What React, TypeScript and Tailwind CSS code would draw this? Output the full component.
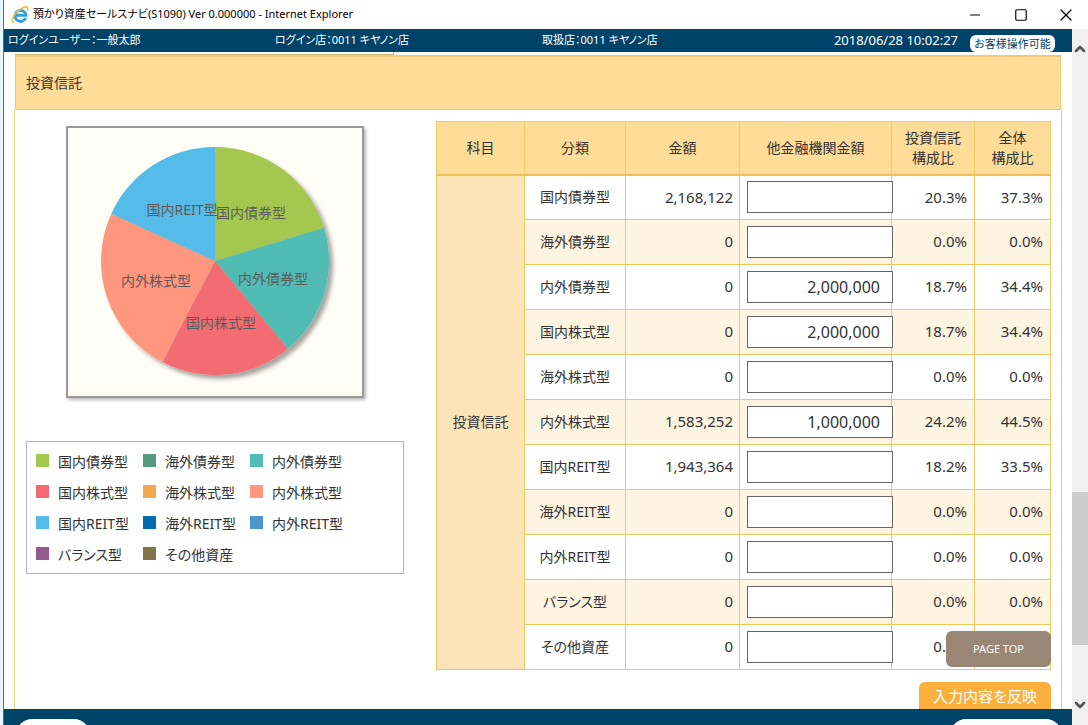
import { useState } from 'react';
import { ChevronDown, ChevronUp, Minus, Square, X } from 'lucide-react';

interface AssetRow {
  name: string;
  color: string;
  amount: string;
  other: string;
  fundRatio: number;
  totalRatio: number;
}

interface Slice {
  name: string;
  color: string;
  value: number;
  labelX: number;
  labelY: number;
}

const ROWS: AssetRow[] = [
  { name: '国内債券型', color: '#a4c84f', amount: '2,168,122', other: '', fundRatio: 20.3, totalRatio: 37.3 },
  { name: '海外債券型', color: '#569a7e', amount: '0', other: '', fundRatio: 0, totalRatio: 0 },
  { name: '内外債券型', color: '#51bcb3', amount: '0', other: '2,000,000', fundRatio: 18.7, totalRatio: 34.4 },
  { name: '国内株式型', color: '#f26c72', amount: '0', other: '2,000,000', fundRatio: 18.7, totalRatio: 34.4 },
  { name: '海外株式型', color: '#f2a84c', amount: '0', other: '', fundRatio: 0, totalRatio: 0 },
  { name: '内外株式型', color: '#ff967e', amount: '1,583,252', other: '1,000,000', fundRatio: 24.2, totalRatio: 44.5 },
  { name: '国内REIT型', color: '#55bbe9', amount: '1,943,364', other: '', fundRatio: 18.2, totalRatio: 33.5 },
  { name: '海外REIT型', color: '#006cb0', amount: '0', other: '', fundRatio: 0, totalRatio: 0 },
  { name: '内外REIT型', color: '#4c96cf', amount: '0', other: '', fundRatio: 0, totalRatio: 0 },
  { name: 'バランス型', color: '#915c8b', amount: '0', other: '', fundRatio: 0, totalRatio: 0 },
  { name: 'その他資産', color: '#7f764b', amount: '0', other: '', fundRatio: 0, totalRatio: 0 },
];

const SLICES: Slice[] = [
  { name: '国内債券型', color: '#a4c84f', value: 20.3, labelX: 183, labelY: 90 },
  { name: '内外債券型', color: '#51bcb3', value: 18.7, labelX: 205, labelY: 156 },
  { name: '国内株式型', color: '#f26c72', value: 18.7, labelX: 153, labelY: 200 },
  { name: '内外株式型', color: '#ff967e', value: 24.2, labelX: 88, labelY: 158 },
  { name: '国内REIT型', color: '#55bbe9', value: 18.2, labelX: 114, labelY: 87 },
];

const CENTER = { x: 147, y: 133 };
const RADIUS = 114;

const pointAt = (ratio: number) => {
  const angle = ratio * Math.PI * 2;
  return `${CENTER.x + RADIUS * Math.sin(angle)} ${CENTER.y - RADIUS * Math.cos(angle)}`;
};

const PieChart = () => {
  const total = SLICES.reduce((sum, slice) => sum + slice.value, 0);
  let start = 0;
  const paths = SLICES.map((slice) => {
    const end = start + slice.value / total;
    const d = `M${CENTER.x} ${CENTER.y} L${pointAt(start)} A${RADIUS} ${RADIUS} 0 0 1 ${pointAt(end)} Z`;
    start = end;
    return <path key={slice.name} d={d} fill={slice.color} />;
  });

  return (
    <svg viewBox="0 0 294 268" className="block w-full" role="img" aria-label="投資信託の構成比">
      <defs>
        <filter id="pie-shadow" x="-10%" y="-10%" width="125%" height="125%">
          <feDropShadow dx="4" dy="4" stdDeviation="2" floodColor="#000" floodOpacity="0.35" />
        </filter>
      </defs>
      <g filter="url(#pie-shadow)">{paths}</g>
      {SLICES.map((slice) => (
        <text
          key={slice.name}
          x={slice.labelX}
          y={slice.labelY}
          textAnchor="middle"
          className="fill-[#5c5c5c] text-sm"
        >
          {slice.name}
        </text>
      ))}
    </svg>
  );
};

const Legend = () => (
  <ul className="mt-[43px] grid w-full grid-cols-[107px_107px_1fr] gap-y-1 border border-[#b5b5b5] pt-1.5 pb-[5px] pl-[9px]">
    {ROWS.map((row) => (
      <li key={row.name} className="flex h-[27px] items-center gap-[9px] text-sm whitespace-nowrap">
        <span className="mb-0.5 size-[13px]" style={{ backgroundColor: row.color }} />
        {row.name}
      </li>
    ))}
  </ul>
);

const HEAD_CELL = 'border border-[#f0cb62] border-b-2 border-b-[#eebf57] bg-[#ffdc98] text-center font-normal';
const CELL = 'border border-[#ebc860]';

const AssetTable = () => {
  const [others, setOthers] = useState<string[]>(ROWS.map((row) => row.other));

  const update = (index: number, value: string) => {
    setOthers(others.map((other, i) => (i === index ? value : other)));
  };

  return (
    <table className="w-full table-fixed border-collapse text-sm">
      <colgroup>
        <col className="w-[88px]" />
        <col className="w-[101px]" />
        <col className="w-[114px]" />
        <col className="w-[152px]" />
        <col className="w-[83px]" />
        <col className="w-[76px]" />
      </colgroup>
      <thead>
        <tr className="h-[53px] leading-5">
          <th scope="col" className={HEAD_CELL}>科目</th>
          <th scope="col" className={HEAD_CELL}>分類</th>
          <th scope="col" className={HEAD_CELL}>金額</th>
          <th scope="col" className={HEAD_CELL}>他金融機関金額</th>
          <th scope="col" className={HEAD_CELL}>投資信託<br />構成比</th>
          <th scope="col" className={HEAD_CELL}>全体<br />構成比</th>
        </tr>
      </thead>
      <tbody>
        {ROWS.map((row, index) => (
          <tr key={row.name} className="h-[45px] bg-white even:bg-[#fdf4e1]">
            {index === 0 && (
              <th
                scope="rowgroup"
                rowSpan={ROWS.length}
                className="border border-[#ebc860] bg-[#fce4b9] text-center font-normal"
              >
                投資信託
              </th>
            )}
            <th scope="row" className="border border-[#ebc860] text-center font-normal">
              {row.name}
            </th>
            <td className={`${CELL} pr-1.5 text-right text-[15px]`}>{row.amount}</td>
            <td className={`${CELL} pl-[7px]`}>
              {/* wider than its column, so it sits over the right-hand rule */}
              <input
                type="text"
                inputMode="numeric"
                aria-label={`${row.name} 他金融機関金額`}
                value={others[index]}
                onChange={(e) => update(index, e.target.value)}
                className="relative block h-8 w-[146px] border border-[#666] bg-white pr-3 text-right text-base"
              />
            </td>
            <td className={`${CELL} pr-[7px] text-right text-[15px]`}>{row.fundRatio.toFixed(1)}%</td>
            <td className={`${CELL} pr-[7px] text-right text-[15px]`}>{row.totalRatio.toFixed(1)}%</td>
          </tr>
        ))}
      </tbody>
    </table>
  );
};

const BrowserIcon = () => (
  <svg viewBox="0 0 16 16" className="size-[18px]" aria-hidden="true">
    <path d="M13 10.6a4.900 4.900 0 1 1 .3-2.400H4.500" fill="none" stroke="#2fa0da" strokeWidth="2.6" />
    <path
      d="M2.6 15C-.2 14.2 1.300 9.600 4.600 5.900 8.400 1.800 13 0 14.500 1.300c.7.700.5 1.800-.1 3"
      fill="none"
      stroke="#ebc043"
      strokeWidth="1.5"
    />
  </svg>
);

const TitleBar = () => (
  <div className="flex h-[29px] shrink-0 items-center bg-white pl-[7px] text-[11px] text-black">
    <BrowserIcon />
    <h1 className="ml-1 flex-1">預かり資産セールスナビ(S1090) Ver 0.000000 - Internet Explorer</h1>
    <button type="button" aria-label="最小化" className="flex w-[46px] justify-center">
      <Minus className="size-4" strokeWidth={1.5} />
    </button>
    <button type="button" aria-label="最大化" className="flex w-[45px] justify-center">
      <Square className="size-3.5" strokeWidth={2} />
    </button>
    <button type="button" aria-label="閉じる" className="flex w-[45px] justify-center">
      <X className="size-5" strokeWidth={1.5} />
    </button>
  </div>
);

const StatusBar = () => (
  <header className="flex h-[23px] shrink-0 items-center bg-[#004368] text-[11px] text-white">
    <p className="w-1/4 pl-1">ログインユーザー：一般太郎</p>
    <p className="w-1/4 pl-1">ログイン店：0011 キヤノン店</p>
    <p className="flex-1 pl-1">取扱店：0011 キヤノン店</p>
    <time className="mr-3 text-[13px]">2018/06/28 10:02:27</time>
    <button
      type="button"
      className="mt-1.5 mr-[17px] h-[17px] w-[85px] rounded-md bg-white leading-[17px] text-[#004368]"
    >
      お客様操作可能
    </button>
  </header>
);

const ScrollBar = () => (
  <div className="flex w-4 shrink-0 flex-col bg-[#f0f0f0] text-[#555]">
    <button type="button" aria-label="上へスクロール" className="flex h-10 items-center justify-center">
      <ChevronUp className="size-4" strokeWidth={4} />
    </button>
    <div className="grow-[423]" />
    <div className="grow-[153] bg-[#cdcdcd]" />
    <div className="grow-[40]" />
    <button type="button" aria-label="下へスクロール" className="flex h-10 items-center justify-center">
      <ChevronDown className="size-4" strokeWidth={4} />
    </button>
  </div>
);

export default function App() {
  return (
    <div className="flex h-screen flex-col overflow-hidden border-l-[3px] border-[#e9f5fc] font-['Noto_Sans','Noto_Sans_CJK_JP',sans-serif] text-[#333] [font-feature-settings:'palt']">
      <div className="flex min-h-0 flex-1 flex-col border-l border-[#2f7ba6] bg-white">
        <TitleBar />
        <div className="flex min-h-0 flex-1">
          <div className="flex min-w-0 flex-1 flex-col">
            <StatusBar />
            <main className="relative min-h-0 flex-1 overflow-hidden px-2.5">
              <div className="ml-px h-[3px] w-[379px] border-r border-b border-[#c9b27a]" />
              <section className="flex flex-col">
                <h2 className="mx-px flex h-[55px] items-center border border-t-2 border-[#efc978] bg-[#ffdc98] pl-2.5 text-sm">
                  投資信託
                </h2>
                <div className="flex items-start gap-8 border-x border-[#ecd07c] pt-[11px] pr-2.5 pb-10 pl-[11px]">
                  <div className="w-[378px] shrink-0">
                    <div className="mt-[5px] ml-10 w-[298px] border-2 border-[#999] bg-[#fffef6] shadow-[2px_2px_3px_#bbb]">
                      <PieChart />
                    </div>
                    <Legend />
                  </div>
                  <div className="flex min-w-0 flex-1 flex-col items-end pl-px">
                    <AssetTable />
                    <button
                      type="button"
                      className="mt-3 h-8 w-[132px] rounded-md border-b-4 border-[#7a5f2c] bg-[#fbb03b] text-[15px] text-white"
                    >
                      入力内容を反映
                    </button>
                  </div>
                </div>
              </section>
              <a
                href="#top"
                className="absolute right-[21px] bottom-[42px] flex h-9 w-[105px] items-center justify-center rounded-md bg-[#998675] text-[11px] text-white"
              >
                PAGE TOP
              </a>
            </main>
            <footer className="flex h-4 shrink-0 justify-between overflow-hidden bg-[#004368] pt-2.5 pr-2.5 pl-3">
              <div className="h-8 w-[74px] rounded-full bg-white" />
              <div className="h-8 w-[112px] rounded-full bg-white" />
            </footer>
          </div>
          <ScrollBar />
        </div>
      </div>
    </div>
  );
}
